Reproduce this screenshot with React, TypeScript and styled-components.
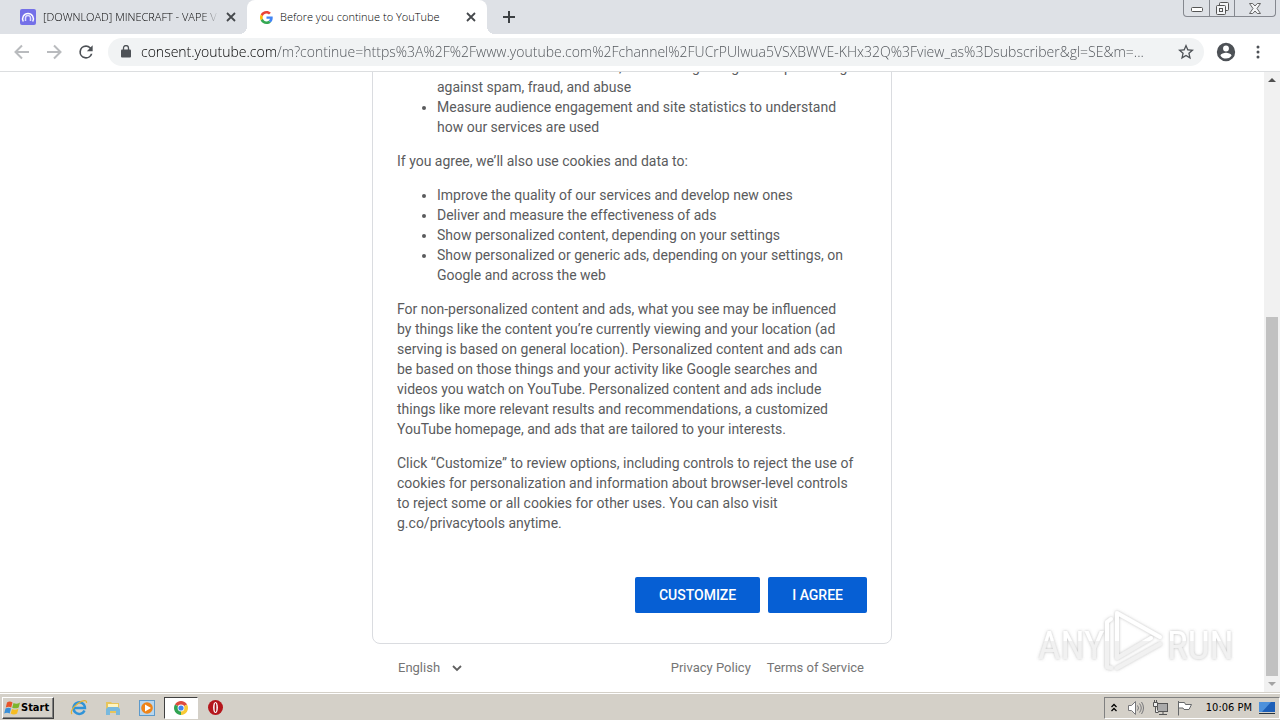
import React from 'react';
import styled, { createGlobalStyle, css } from 'styled-components';

const Global = createGlobalStyle`
  * { box-sizing: border-box; }
  html, body, #root { height: 100%; }
  body { margin: 0; background: #fff; font-family: Roboto, sans-serif; overflow: hidden; }
  button { font: inherit; padding: 0; border: 0; background: none; color: inherit; }
  svg { display: block; flex: none; }
`;

const uiFont = css`font-family: 'Open Sans', 'Noto Sans', sans-serif;`;

const Desktop = styled.div`
  height: 100%;
  display: flex;
  flex-direction: column;
`;

/* ---------- browser chrome ---------- */
const TabStrip = styled.div`
  flex: none;
  height: 34px;
  display: flex;
  align-items: flex-start;
  background: #dee1e6;
  ${uiFont}
`;
const Tab = styled.div<{ $active?: boolean }>`
  position: relative;
  width: ${p => (p.$active ? 240 : 247)}px;
  height: 34px;
  display: flex;
  align-items: center;
  padding: 0 8px 0 ${p => (p.$active ? 13 : 20)}px;
  border-radius: 8px 8px 0 0;
  background: ${p => (p.$active ? '#fff' : 'transparent')};
  ${p => p.$active && css`
    &::before, &::after {
      content: '';
      position: absolute;
      bottom: 0;
      width: 8px;
      height: 8px;
    }
    &::before { left: -8px; background: radial-gradient(circle at 0 0, transparent 8px, #fff 8px); }
    &::after { right: -8px; background: radial-gradient(circle at 100% 0, transparent 8px, #fff 8px); }
  `}
`;
const TabTitle = styled.span<{ $fade?: boolean }>`
  flex: 1;
  min-width: 0;
  margin: 0 4px 0 7px;
  overflow: hidden;
  white-space: nowrap;
  font-size: 11px;
  font-weight: 300;
  line-height: 16px;
  color: #000;
  ${p => p.$fade && css`mask-image: linear-gradient(to right, #000 90%, transparent 100%);`}
`;
const IconButton = styled.button<{ $size: number }>`
  width: ${p => p.$size}px;
  height: ${p => p.$size}px;
  display: flex;
  align-items: center;
  justify-content: center;
  flex: none;
`;
const NewTab = styled(IconButton)`margin: 3px 0 0 8px;`;
const WindowButtons = styled.div`
  margin: 0 4px 0 auto;
  height: 17px;
  display: flex;
  border: 1px solid #85888f;
  border-top: 0;
  border-radius: 0 0 4px 4px;
`;
const WindowButton = styled.button<{ $wide?: boolean }>`
  width: ${p => (p.$wide ? 41 : 25)}px;
  display: flex;
  align-items: center;
  justify-content: center;
  & + & { border-left: 1px solid #85888f; }
`;
const Toolbar = styled.div`
  flex: none;
  height: 38px;
  display: flex;
  align-items: center;
  padding: 0 12px 2px 10px;
  border-bottom: 1px solid #dcdee0;
  background: #fff;
`;
const NavButton = styled(IconButton)`margin-right: 8px;`;
const AddressBar = styled.label`
  flex: 1;
  min-width: 0;
  height: 28px;
  margin: 0 10px 0 2px;
  padding: 0 10px 0 13px;
  display: flex;
  align-items: center;
  gap: 10px;
  border-radius: 14px;
  background: #f1f3f4;
`;
const AddressInput = styled.input`
  flex: 1;
  min-width: 0;
  padding: 0;
  border: 0;
  outline: 0;
  ${uiFont}
  font-size: 14px;
  font-weight: 300;
  line-height: 20px;
  text-overflow: ellipsis;
  color: transparent;
  background: linear-gradient(to right, #000 135px, #4d5156 135px);
  background-clip: text;
`;
const MenuButton = styled(IconButton)`margin-left: 10px;`;

/* ---------- page ---------- */
const Viewport = styled.div`
  flex: 1;
  min-height: 0;
  display: flex;
  position: relative;
`;
const Page = styled.div`
  flex: 1;
  min-width: 0;
  overflow: hidden;
  display: flex;
  flex-direction: column;
  justify-content: flex-end;
  align-items: center;
`;
const Card = styled.main`
  flex: none;
  width: 520px;
  max-width: 100%;
  padding: 24px 24px 30px;
  border: 1px solid #dadce0;
  border-radius: 8px;
  font-size: 14px;
  line-height: 20px;
  color: #5a5b5d;
`;
const Paragraph = styled.p`
  margin: 14px 0;
  white-space: nowrap;
`;
const List = styled.ul`
  margin: 14px 0;
  padding-left: 40px;
  white-space: nowrap;
`;
const Actions = styled.div`
  margin-top: 44px;
  display: flex;
  justify-content: flex-end;
  gap: 8px;
`;
const ActionButton = styled.button`
  && { padding: 0 24px; background: #065fd4; color: #fff; font-weight: 500; }
  height: 36px;
  border-radius: 2px;
  text-transform: uppercase;
`;
const Footer = styled.footer`
  flex: none;
  width: 520px;
  max-width: 100%;
  height: 48px;
  padding: 0 28px 0 26px;
  display: flex;
  align-items: center;
  justify-content: space-between;
  font-size: 13px;
  line-height: 16px;
  color: #757575;
`;
const Language = styled.label`
  display: flex;
  align-items: center;
`;
const LanguageSelect = styled.select`
  appearance: none;
  width: 54px;
  padding: 0;
  border: 0;
  background: none;
  font: inherit;
  color: inherit;
`;
const Links = styled.nav`
  display: flex;
  gap: 16px;
`;
const FooterLink = styled.a`
  color: inherit;
  text-decoration: none;
`;
const Scrollbar = styled.div`
  flex: none;
  width: 16px;
  display: flex;
  flex-direction: column;
  background: #f1f1f1;
`;
const ScrollTrack = styled.div`
  flex: 1;
  display: flex;
  flex-direction: column;
  justify-content: flex-end;
  padding: 0 2px;
`;
const ScrollThumb = styled.div`
  height: 61%;
  background: #c1c1c1;
`;
const Watermark = styled.div`
  position: absolute;
  right: 44px;
  bottom: 16px;
  pointer-events: none;
`;

/* ---------- taskbar ---------- */
const Taskbar = styled.div`
  flex: none;
  height: 28px;
  display: flex;
  align-items: center;
  padding: 2px 0 0 2px;
  background: #d4d0c8;
  border-top: 1px solid #d4d0c8;
  box-shadow: inset 0 1px #fff;
  font-family: 'DejaVu Sans Condensed', 'DejaVu Sans', sans-serif;
  font-size: 11px;
`;
const StartButton = styled.button`
  && { border: 1px solid; border-color: #fff #404040 #404040 #fff; font-weight: bold; color: #000; }
  width: 52px;
  height: 22px;
  display: flex;
  align-items: center;
  padding-left: 1px;
  box-shadow: inset -1px -1px #808080;
`;
const QuickLaunch = styled.div`
  display: flex;
  align-items: center;
  margin-left: 8px;
`;
const TaskButton = styled.button<{ $active?: boolean }>`
  width: 34px;
  height: 22px;
  display: flex;
  align-items: center;
  justify-content: center;
  ${p => p.$active && css`&& { background: #fff; border: 1px solid; border-color: #404040 #fff #fff #404040; }`}
`;
const Tray = styled.div`
  margin-left: auto;
  height: 22px;
  padding: 0 4px 0 6px;
  display: flex;
  align-items: center;
  gap: 7px;
  border: 1px solid;
  border-color: #808080 #fff #fff #808080;
  color: #000;
`;
const TrayToggle = styled.button`
  && { margin-right: 3px; }
`;
const Clock = styled.time`
  margin-left: 6px;
  white-space: nowrap;
`;

const CloseIcon = () => (
  <svg width="10" height="10" viewBox="0 0 10 10" stroke="#45484c" strokeWidth="1.8"><path d="M1 1l8 8M9 1L1 9" /></svg>
);
const GoogleIcon = () => (
  <svg width="13" height="13" viewBox="0 0 48 48">
    <path fill="#EA4335" d="M24 9.5c3.54 0 6.71 1.22 9.21 3.6l6.85-6.85C35.9 2.38 30.47 0 24 0 14.62 0 6.51 5.38 2.56 13.22l7.98 6.19C12.43 13.72 17.74 9.5 24 9.5z" />
    <path fill="#4285F4" d="M46.98 24.55c0-1.57-.15-3.09-.38-4.55H24v9.02h12.94c-.58 2.96-2.26 5.48-4.78 7.18l7.73 6c4.51-4.18 7.09-10.36 7.09-17.65z" />
    <path fill="#FBBC05" d="M10.53 28.59A14.5 14.5 0 0 1 9.77 24c0-1.6.27-3.14.76-4.59l-7.98-6.19A23.9 23.9 0 0 0 0 24c0 3.88.92 7.54 2.56 10.78l7.97-6.19z" />
    <path fill="#34A853" d="M24 48c6.48 0 11.93-2.13 15.89-5.81l-7.73-6c-2.15 1.45-4.92 2.3-8.16 2.3-6.26 0-11.57-4.22-13.47-9.91l-7.98 6.19C6.51 42.62 14.62 48 24 48z" />
  </svg>
);

const address =
  'consent.youtube.com/m?continue=https%3A%2F%2Fwww.youtube.com%2Fchannel%2FUCrPUlwua5VSXBWVE-KHx32Q%3Fview_as%3Dsubscriber&gl=SE&m=...';

function BrowserChrome() {
  return (
    <>
      <TabStrip>
        <Tab>
          <svg width="16" height="16" viewBox="0 0 16 16">
            <rect width="16" height="16" rx="2" fill="#7470e8" />
            <path d="M3.3 12.5A5.4 5.4 0 1 1 12.7 12.5" fill="none" stroke="#fff" strokeWidth="1.5" />
            <path d="M5.5 12V9a2.5 2.5 0 0 1 5 0v3" fill="none" stroke="#dcdcff" strokeWidth="1.5" />
          </svg>
          <TabTitle $fade>[DOWNLOAD] MINECRAFT - VAPE V</TabTitle>
          <IconButton $size={16} aria-label="Close tab"><CloseIcon /></IconButton>
        </Tab>
        <Tab $active>
          <GoogleIcon />
          <TabTitle>Before you continue to YouTube</TabTitle>
          <IconButton $size={16} aria-label="Close tab"><CloseIcon /></IconButton>
        </Tab>
        <NewTab $size={28} aria-label="New tab">
          <svg width="12" height="12" viewBox="0 0 12 12" stroke="#3c4043" strokeWidth="2"><path d="M6 0v12M0 6h12" /></svg>
        </NewTab>
        <WindowButtons>
          <WindowButton aria-label="Minimize">
            <svg width="12" height="12" viewBox="0 0 12 12"><rect x=".5" y="5.5" width="11" height="4" rx="1" fill="#fff" stroke="#555" /></svg>
          </WindowButton>
          <WindowButton aria-label="Restore">
            <svg width="13" height="13" viewBox="0 0 13 13" fill="#f4f5f7" stroke="#555"><rect x="3.5" y=".5" width="9" height="8" rx="1" /><rect x=".5" y="3.5" width="9" height="9" rx="1" /><rect x="3.5" y="6.5" width="3" height="3" /></svg>
          </WindowButton>
          <WindowButton $wide aria-label="Close">
            <svg width="12" height="11" viewBox="0 0 12 11" fill="#f4f5f7" stroke="#666"><path d="M.5.5h3.2L6 3 8.300.5h3.2L8 5.500l3.500 5H8.300L6 8l-2.300 2.500H.5L4 5.500z" /></svg>
          </WindowButton>
        </WindowButtons>
      </TabStrip>
      <Toolbar>
        <NavButton $size={24} aria-label="Back">
          <svg width="16" height="16" viewBox="0 0 16 16" fill="none" stroke="#b9bbbe" strokeWidth="2"><path d="M15 8H2M8 1.500L1.500 8 8 14.500" /></svg>
        </NavButton>
        <NavButton $size={24} aria-label="Forward">
          <svg width="16" height="16" viewBox="0 0 16 16" fill="none" stroke="#b9bbbe" strokeWidth="2"><path d="M1 8h13M8 1.500L14.500 8 8 14.500" /></svg>
        </NavButton>
        <NavButton $size={24} aria-label="Reload">
          <svg width="20" height="20" viewBox="0 0 24 24" fill="#4d5156"><path d="M17.650 6.350A7.960 7.960 0 0 0 12 4a8 8 0 1 0 7.730 10h-2.080A6 6 0 1 1 12 6c1.660 0 3.140.69 4.220 1.780L13 11h7V4z" /></svg>
        </NavButton>
        <AddressBar>
          <svg width="10" height="13" viewBox="0 0 10 13"><rect y="4.500" width="10" height="8" rx="1" fill="#4d5156" /><path d="M2.500 5V3a2.500 2.500 0 0 1 5 0v2" fill="none" stroke="#4d5156" strokeWidth="1.300" /></svg>
          <AddressInput aria-label="Address" readOnly value={address} />
          <svg width="16" height="16" viewBox="2 2 20 20" fill="#4d5156"><path d="M22 9.240l-7.190-.62L12 2 9.190 8.630 2 9.240l5.460 4.730L5.820 21 12 17.270 18.180 21l-1.630-7.030L22 9.240zM12 15.400l-3.760 2.270 1-4.280-3.320-2.880 4.380-.38L12 6.100l1.710 4.040 4.380.38-3.320 2.880 1 4.280L12 15.400z" /></svg>
        </AddressBar>
        <IconButton $size={24} aria-label="Profile">
          <svg width="22" height="22" viewBox="0 0 24 24" fill="#4d5156"><path d="M12 2a10 10 0 1 0 0 20 10 10 0 0 0 0-20zm0 3a3.200 3.200 0 1 1 0 6.400A3.200 3.200 0 0 1 12 5zm0 14.200a7.200 7.200 0 0 1-6-3.220c.03-1.990 4-3.080 6-3.080s5.970 1.090 6 3.080a7.200 7.200 0 0 1-6 3.220z" /></svg>
        </IconButton>
        <MenuButton $size={20} aria-label="Menu">
          <svg width="4" height="14" viewBox="0 0 4 14" fill="#4d5156"><circle cx="2" cy="2" r="1.500" /><circle cx="2" cy="7" r="1.500" /><circle cx="2" cy="12" r="1.500" /></svg>
        </MenuButton>
      </Toolbar>
    </>
  );
}

function ConsentPage() {
  return (
    <Viewport>
      <Page>
        <Card>
          <List>
            <li>Deliver and maintain services, like tracking outages and protecting<br />against spam, fraud, and abuse</li>
            <li>Measure audience engagement and site statistics to understand<br />how our services are used</li>
          </List>
          <Paragraph>If you agree, we’ll also use cookies and data to:</Paragraph>
          <List>
            <li>Improve the quality of our services and develop new ones</li>
            <li>Deliver and measure the effectiveness of ads</li>
            <li>Show personalized content, depending on your settings</li>
            <li>Show personalized or generic ads, depending on your settings, on<br />Google and across the web</li>
          </List>
          <Paragraph>
            For non-personalized content and ads, what you see may be influenced<br />
            by things like the content you’re currently viewing and your location (ad<br />
            serving is based on general location). Personalized content and ads can<br />
            be based on those things and your activity like Google searches and<br />
            videos you watch on YouTube. Personalized content and ads include<br />
            things like more relevant results and recommendations, a customized<br />
            YouTube homepage, and ads that are tailored to your interests.
          </Paragraph>
          <Paragraph>
            Click “Customize” to review options, including controls to reject the use of<br />
            cookies for personalization and information about browser-level controls<br />
            to reject some or all cookies for other uses. You can also visit<br />
            g.co/privacytools anytime.
          </Paragraph>
          <Actions>
            <ActionButton>Customize</ActionButton>
            <ActionButton>I agree</ActionButton>
          </Actions>
        </Card>
        <Footer>
          <Language>
            <LanguageSelect aria-label="Language"><option>English</option></LanguageSelect>
            <svg width="10" height="7" viewBox="0 0 10 7" fill="none" stroke="#606060" strokeWidth="1.800"><path d="M1 1l4 4 4-4" /></svg>
          </Language>
          <Links>
            <FooterLink href="#privacy">Privacy Policy</FooterLink>
            <FooterLink href="#terms">Terms of Service</FooterLink>
          </Links>
        </Footer>
      </Page>
      <Scrollbar>
        <IconButton $size={16} aria-label="Scroll up"><svg width="8" height="4" viewBox="0 0 8 4" fill="#505050"><path d="M0 4l4-4 4 4z" /></svg></IconButton>
        <ScrollTrack><ScrollThumb /></ScrollTrack>
        <IconButton $size={16} aria-label="Scroll down"><svg width="8" height="4" viewBox="0 0 8 4" fill="#a3a3a3"><path d="M0 0l4 4 4-4z" /></svg></IconButton>
      </Scrollbar>
      <Watermark>
        <svg width="202" height="70" viewBox="0 0 202 70">
          <defs>
            <filter id="glow" x="-10%" y="-10%" width="120%" height="120%"><feDropShadow dx="0" dy="0" stdDeviation="1.500" floodColor="#777" floodOpacity=".5" /></filter>
            <linearGradient id="sheen" x1="0" y1="0" x2="0" y2="70" gradientUnits="userSpaceOnUse"><stop offset=".5" stopColor="#fff" /><stop offset=".5" stopColor="#f1f1f1" /></linearGradient>
          </defs>
          <g filter="url(#glow)" fill="url(#sheen)" fontFamily="'Liberation Sans Narrow', 'Roboto Condensed', sans-serif" fontSize="39">
            <text x="4" y="53">ANY</text>
            <text x="133" y="53">RUN</text>
            <g fill="none" stroke="url(#sheen)" strokeWidth="4" strokeLinejoin="round" strokeLinecap="round">
              <path d="M83 51V7l43 24M83 23v29l34-20" />
              <path d="M77 13l-4 3v45l4 1M83 62l43-24" />
            </g>
          </g>
        </svg>
      </Watermark>
    </Viewport>
  );
}

function SystemTaskbar() {
  return (
    <Taskbar>
      <StartButton>
        <svg width="17" height="16" viewBox="0 0 17 16">
          <path fill="#e8542a" d="M3 2.500C5 1 7 1.500 8.500 2.500L7.200 7.500C5.500 6.500 4 6.500 1.800 7.500z" />
          <path fill="#7db52c" d="M9.500 3c2 1 4 1 6.500-.5L14.700 7.500c-2.200 1.200-4.500 1-6.500.3z" />
          <path fill="#3a8fd8" d="M1.500 8.500c2-1 4-1 5.500 0l-1.300 5c-1.700-1-3.500-1-5.500 0z" />
          <path fill="#f6bd23" d="M8 9c2 1 4.300 1 6.500-.5l-1.400 5c-2.300 1.200-4.400 1.200-6.400 0z" />
        </svg>
        Start
      </StartButton>
      <QuickLaunch>
        <TaskButton aria-label="Internet Explorer">
          <svg width="18" height="17" viewBox="0 0 18 17" fill="none">
            <path d="M14.500 11.500A5.800 5.800 0 1 1 15 9H4" stroke="#2f93d8" strokeWidth="2.400" />
            <path d="M2 15c-2-2 1-7 6-10.500S17 .5 16.500 4" stroke="#e5b334" strokeWidth="1.200" />
          </svg>
        </TaskButton>
        <TaskButton aria-label="Explorer">
          <svg width="16" height="16" viewBox="0 0 16 16"><path d="M1 2h5l1 1h7v10H1z" fill="#e7c55c" /><path d="M3 4h10v4H3z" fill="#fff4bf" /><path d="M1 9l2-2h10l2 2v6h-4v-4H5v4H1z" fill="#78b9de" /></svg>
        </TaskButton>
        <TaskButton aria-label="Media Player">
          <svg width="16" height="16" viewBox="0 0 16 16"><rect x=".5" y=".5" width="15" height="15" fill="#b8d6ee" stroke="#5d9acb" /><circle cx="8" cy="8" r="5.800" fill="#ef8418" /><path d="M6 4.500l6 3.500-6 3.500z" fill="#fff" /></svg>
        </TaskButton>
        <TaskButton $active aria-label="Chrome">
          <svg width="14" height="14" viewBox="0 0 14 14"><path fill="#dd4b3e" d="M7 7L.94 3.500a7 7 0 0 1 12.120 0z" /><path fill="#f8ca35" d="M7 7l6.060-3.500A7 7 0 0 1 7 14z" /><path fill="#30a352" d="M7 7v7A7 7 0 0 1 .94 3.500z" /><circle cx="7" cy="7" r="3.400" fill="#fff" /><circle cx="7" cy="7" r="2.600" fill="#4184f0" /></svg>
        </TaskButton>
        <TaskButton aria-label="Opera">
          <svg width="15" height="15" viewBox="0 0 15 15"><circle cx="7.500" cy="7.500" r="7.500" fill="#b5161c" /><ellipse cx="7.500" cy="7.500" rx="2.400" ry="5.500" fill="#fff" /><ellipse cx="7.500" cy="7.500" rx=".9" ry="4.500" fill="#a51016" /></svg>
        </TaskButton>
      </QuickLaunch>
      <Tray>
        <TrayToggle aria-label="Show hidden icons">
          <svg width="6" height="9" viewBox="0 0 6 9" fill="none" stroke="#000" strokeWidth="1.300"><path d="M.5 4L3 1.500 5.500 4M.5 8L3 5.500 5.500 8" /></svg>
        </TrayToggle>
        <svg width="18" height="16" viewBox="0 0 18 16" fill="none" stroke="#77777a"><path d="M1.500 5.500h3l4-4v13l-4-4h-3z" fill="#fff" /><path d="M10.500 5.500q2 2.500 0 5M12.500 3.500q3.500 4.500 0 9M14.500 2q4 6 0 12" /></svg>
        <svg width="17" height="16" viewBox="0 0 17 16" fill="#eee" stroke="#555"><rect x="5.500" y="3.500" width="10" height="8" fill="#aaa" /><path d="M7 14.500h8M11 12v2" /><path d="M1.500 2.500h4v4h-4zM3.500 7v5.500h3M2.500 0v2M4.500 0v2" /></svg>
        <svg width="17" height="16" viewBox="0 0 17 16" fill="#fff" stroke="#66686a"><path d="M2.500 1v14.500M2.500 2.500h6l1 2h6l-2.500 5H8l-1-1.500H2.500z" /></svg>
        <Clock>10:06 PM</Clock>
        <svg width="16" height="14" viewBox="0 0 16 14"><rect y="1" width="16" height="10" fill="#1d5fb8" /><path d="M0 1h12L3 11H0z" fill="#4d91dc" /><path d="M0 12h16v1H0z" fill="#27343f" /></svg>
      </Tray>
    </Taskbar>
  );
}

export default function App() {
  return (
    <Desktop>
      <Global />
      <BrowserChrome />
      <ConsentPage />
      <SystemTaskbar />
    </Desktop>
  );
}
